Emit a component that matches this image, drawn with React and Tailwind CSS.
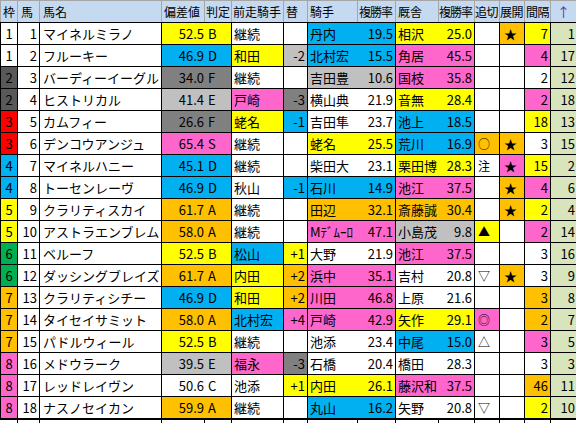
import React from 'react';

const BG = {
  w: 'bg-white',
  y: 'bg-[#ffff00]',
  b: 'bg-[#00b0f0]',
  p: 'bg-[#ff66cc]',
  d: 'bg-[#808080]',
  g: 'bg-[#c0c0c0]',
  o: 'bg-[#ffc000]',
};

const WAKU = {
  1: 'bg-white',
  2: 'bg-[#595959]',
  3: 'bg-[#ff0000]',
  4: 'bg-[#00b0f0]',
  5: 'bg-[#ffff00]',
  6: 'bg-[#00b050]',
  7: 'bg-[#ffc000]',
  8: 'bg-[#ff66cc]',
};

// waku, uma, name, dev, devBg, grade, prev, prevBg, chg, chgBg, jockey, jRate, jBg,
// trainer, tRate, tBg, oikiri, oBg, tenkai, tenBg, interval, iBg, up
const rows = [
  ['1', '1', 'マイネルミラノ', '52.5', 'y', 'B', '継続', 'w', '', 'w', '丹内', '19.5', 'b', '相沢', '25.0', 'y', '', 'w', '★', 'o', '7', 'y', '1'],
  ['1', '2', 'フルーキー', '46.9', 'b', 'D', '和田', 'y', '-2', 'g', '北村宏', '15.5', 'b', '角居', '45.5', 'p', '', 'w', '', 'w', '4', 'p', '17'],
  ['2', '3', 'バーディーイーグル', '34.0', 'd', 'F', '継続', 'w', '', 'w', '吉田豊', '10.6', 'g', '国枝', '35.8', 'p', '', 'w', '', 'w', '2', 'w', '12'],
  ['2', '4', 'ヒストリカル', '41.4', 'g', 'E', '戸崎', 'p', '-3', 'd', '横山典', '21.9', 'w', '音無', '28.4', 'y', '', 'w', '', 'w', '2', 'p', '18'],
  ['3', '5', 'カムフィー', '26.6', 'd', 'F', '蛯名', 'y', '-1', 'b', '吉田隼', '23.7', 'w', '池上', '18.5', 'b', '', 'w', '', 'w', '18', 'y', '13'],
  ['3', '6', 'デンコウアンジュ', '65.4', 'p', 'S', '継続', 'w', '', 'w', '蛯名', '25.5', 'y', '荒川', '16.9', 'b', '○', 'o', '★', 'o', '3', 'w', '15'],
  ['4', '7', 'マイネルハニー', '45.1', 'b', 'D', '継続', 'w', '', 'w', '柴田大', '23.1', 'w', '栗田博', '28.3', 'y', '注', 'w', '★', 'p', '15', 'y', '2'],
  ['4', '8', 'トーセンレーヴ', '46.9', 'b', 'D', '秋山', 'w', '-1', 'b', '石川', '14.9', 'b', '池江', '37.5', 'p', '', 'w', '★', 'o', '4', 'p', '6'],
  ['5', '9', 'クラリティスカイ', '61.7', 'o', 'A', '継続', 'w', '', 'w', '田辺', '32.1', 'o', '斎藤誠', '30.4', 'o', '', 'w', '★', 'o', '2', 'y', '4'],
  ['5', '10', 'アストラエンブレム', '58.0', 'o', 'A', '継続', 'w', '', 'w', 'Mﾃﾞﾑｰﾛ', '47.1', 'p', '小島茂', '9.8', 'g', '▲', 'y', '', 'w', '2', 'p', '14'],
  ['6', '11', 'ベルーフ', '52.5', 'y', 'B', '松山', 'b', '+1', 'y', '大野', '21.9', 'w', '池江', '37.5', 'p', '', 'w', '', 'w', '3', 'w', '16'],
  ['6', '12', 'ダッシングブレイズ', '61.7', 'o', 'A', '内田', 'y', '+2', 'o', '浜中', '35.1', 'p', '吉村', '20.8', 'w', '▽', 'w', '★', 'o', '3', 'w', '9'],
  ['7', '13', 'クラリティシチー', '46.9', 'b', 'D', '和田', 'y', '+2', 'o', '川田', '46.8', 'p', '上原', '21.6', 'w', '', 'w', '', 'w', '3', 'o', '8'],
  ['7', '14', 'タイセイサミット', '58.0', 'o', 'A', '北村宏', 'b', '+4', 'p', '戸崎', '42.9', 'p', '矢作', '29.1', 'y', '◎', 'p', '', 'w', '2', 'o', '7'],
  ['7', '15', 'パドルウィール', '52.5', 'y', 'B', '継続', 'w', '', 'w', '池添', '23.4', 'w', '中尾', '15.0', 'b', '△', 'w', '', 'w', '3', 'p', '5'],
  ['8', '16', 'メドウラーク', '39.5', 'g', 'E', '福永', 'p', '-3', 'd', '石橋', '20.4', 'w', '橋田', '28.3', 'w', '', 'w', '', 'w', '3', 'w', '3'],
  ['8', '17', 'レッドレイヴン', '50.6', 'w', 'C', '池添', 'w', '+1', 'y', '内田', '26.1', 'y', '藤沢和', '37.5', 'p', '', 'w', '', 'w', '46', 'o', '11'],
  ['8', '18', 'ナスノセイカン', '59.9', 'o', 'A', '継続', 'w', '', 'w', '丸山', '16.2', 'b', '矢野', '20.8', 'w', '▽', 'w', '', 'w', '2', 'y', '10'],
];

const headers = [
  ['枠', 'w-[18px] border-l pl-[2px]'],
  ['馬', 'w-[22px] pl-[3px]'],
  ['馬名', 'w-[122px] pl-[3px]'],
  ['偏差値', 'w-[43px] pl-[2px]'],
  ['判定', 'w-[27px] pl-[1px]'],
  ['前走騎手', 'w-[52px] pl-[1px]'],
  ['替', 'w-[24px] pl-[2px]'],
  ['騎手', 'w-[50px] pl-[2px]'],
  ['複勝率', 'w-[38px] pl-[1px] tracking-[-1px]'],
  ['厩舎', 'w-[43px] pl-[2px]'],
  ['複勝率', 'w-[36px] pl-[0px] tracking-[-1px]'],
  ['追切', 'w-[25px] pl-[0px] tracking-[-0.5px]'],
  ['展開', 'w-[25px] pl-[0px] tracking-[-0.5px]'],
  ['間隔', 'w-[26px] pl-[1px] tracking-[-0.5px]'],
];

function Cell({ className, children }) {
  return (
    <div className={`shrink-0 h-full flex items-center whitespace-nowrap overflow-hidden ${className}`}>
      {children}
    </div>
  );
}

function Row({ r }) {
  const [waku, uma, name, dev, devBg, grade, prev, prevBg, chg, chgBg, jockey, jRate, jBg,
    trainer, tRate, tBg, oikiri, oBg, tenkai, tenBg, interval, iBg, up] = r;
  return (
    <div className="flex h-[22px] border-b border-black">
      <Cell className={`w-[18px] border-l border-r border-black justify-center ${WAKU[waku]}`}>{waku}</Cell>
      <Cell className="w-[22px] border-r border-black justify-end pr-[2px] bg-white">{uma}</Cell>
      <Cell className="w-[122px] border-r border-black pl-[3px] bg-white">{name}</Cell>
      <Cell className={`w-[43px] justify-end pr-[1px] ${BG[devBg]}`}>{dev}</Cell>
      <Cell className={`w-[27px] border-r border-black pl-[3px] ${BG[devBg]}`}>{grade}</Cell>
      <Cell className={`w-[52px] border-r border-black pl-[2px] ${BG[prevBg]}`}>{prev}</Cell>
      <Cell className={`w-[24px] border-r border-black justify-end pr-[2px] ${BG[chgBg]}`}>{chg}</Cell>
      <Cell className={`w-[50px] pl-[2px] ${BG[jBg]}`}>{jockey}</Cell>
      <Cell className={`w-[38px] border-r border-black justify-end pr-[2px] ${BG[jBg]}`}>{jRate}</Cell>
      <Cell className={`w-[43px] pl-[2px] ${BG[tBg]}`}>{trainer}</Cell>
      <Cell className={`w-[36px] border-r border-black justify-end pr-[2px] ${BG[tBg]}`}>{tRate}</Cell>
      <Cell className={`w-[25px] border-r border-black pl-[3px] text-[12px] ${BG[oBg]}`}>{oikiri}</Cell>
      <Cell className={`w-[25px] border-r border-black pl-[4px] ${BG[tenBg]}`}>{tenkai}</Cell>
      <Cell className={`w-[26px] border-r border-black justify-end pr-[2px] ${BG[iBg]}`}>{interval}</Cell>
      <Cell className="w-[25px] justify-end pr-[1px] bg-[#d8e4bc]">{up}</Cell>
    </div>
  );
}

export default function App() {
  return (
    <div
      className="w-[576px] h-[423px] overflow-hidden bg-white text-black text-[13px] leading-none"
      style={{ fontFamily: '"Noto Sans CJK JP", "Noto Sans", sans-serif' }}
    >
      <div className="flex h-[23px] border-t border-b border-t-[#a6a6a6] border-b-black bg-[#c5d9f1] text-[12px]">
        {headers.map(([label, w], i) => (
          <Cell key={i} className={`${w} border-r border-[#a6a6a6]`}>{label}</Cell>
        ))}
        <Cell className="w-[25px] pl-[6px] text-[13px] text-[#5b2ea0]">↑</Cell>
      </div>
      {rows.map((r) => (
        <Row key={r[1]} r={r} />
      ))}
      <div className="flex h-[22px] border-t border-black">
        {[18, 22, 122, 43, 27, 52, 24, 50, 38, 43, 36, 25, 25, 26].map((w, i) => (
          <div key={i} className="shrink-0 h-full border-r border-black bg-white" style={{ width: w }} />
        ))}
      </div>
    </div>
  );
}
